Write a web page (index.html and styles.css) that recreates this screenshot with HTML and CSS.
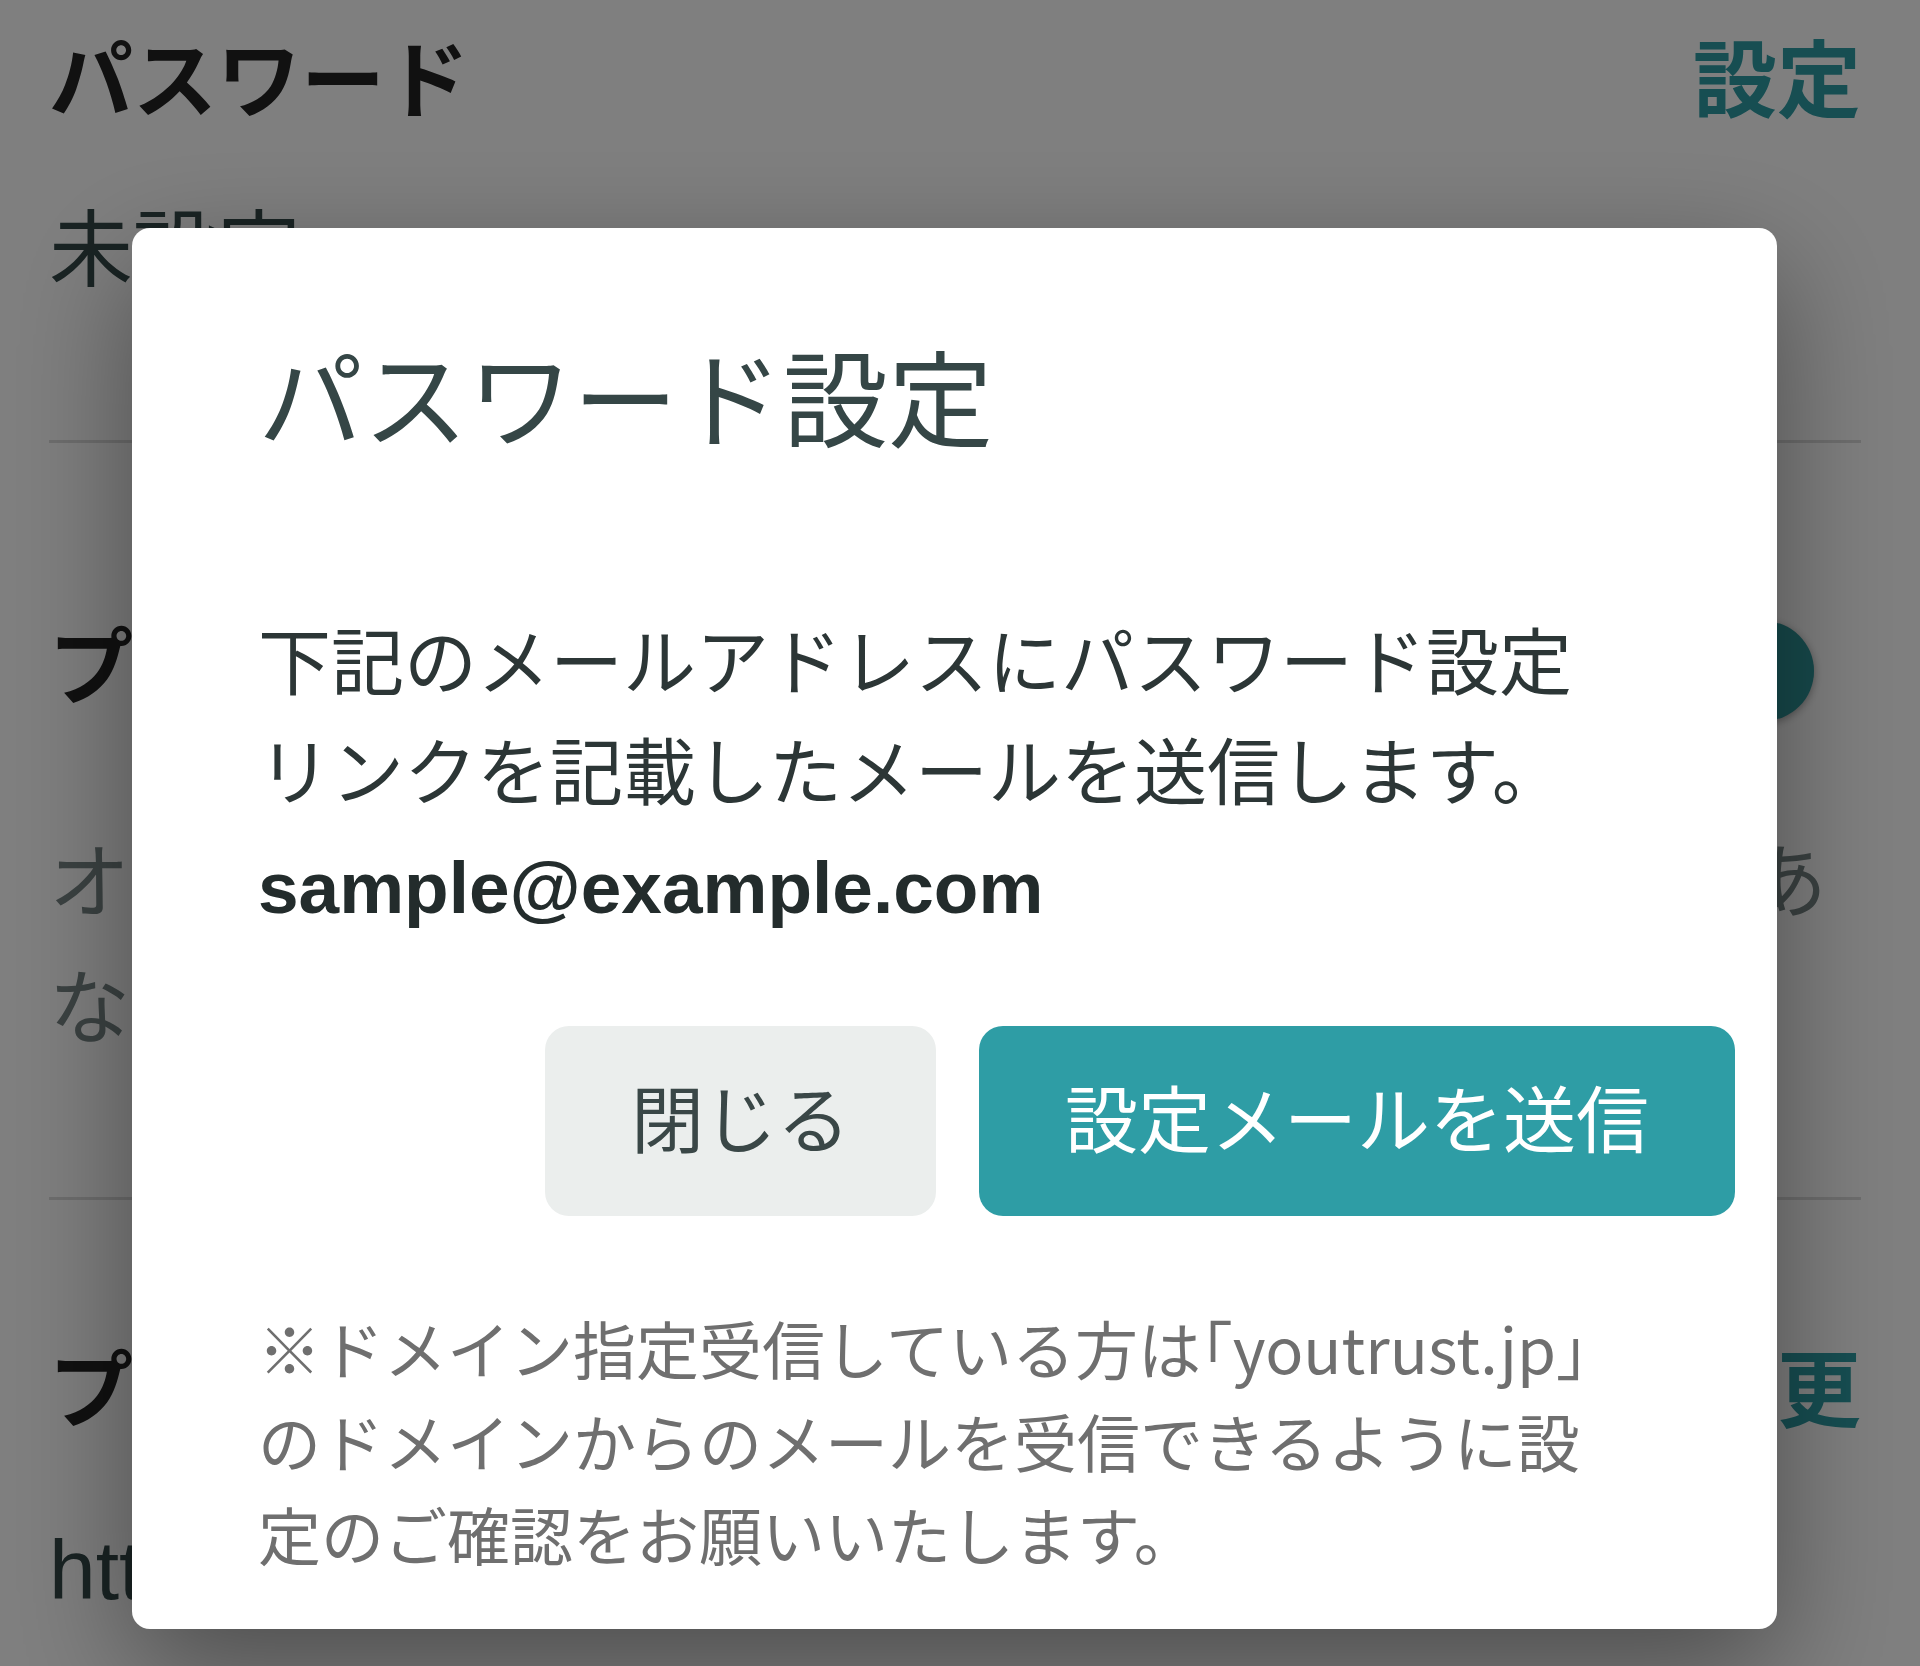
FILE: index.html
```html
<!DOCTYPE html>
<html lang="ja">

<head>
    <meta charset="utf-8">
    <meta name="viewport" content="width=device-width, initial-scale=1.0" />
    <title>パスワード設定</title>
    <link rel="stylesheet" href="styles.css">
</head>

<body>
    <div class="settings">
        <section class="item item-first">
            <div class="item-head">
                <h2>パスワード</h2>
                <a class="item-link" href="#">設定</a>
            </div>
            <p class="item-value">未設定</p>
        </section>

        <section class="item">
            <div class="item-head item-head-toggle">
                <h2>プロフィール公開</h2>
                <span class="toggle"><span class="knob"></span></span>
            </div>
            <p class="item-desc">オンにすると、他のユーザーや企業の担当者があなたのプロフィールを閲覧できます。</p>
        </section>

        <section class="item item-last">
            <div class="item-head">
                <h2>プロフィールURL</h2>
                <a class="item-link" href="#">変更</a>
            </div>
            <p class="item-url">https://youtrust.jp/users/sample</p>
        </section>
    </div>

    <div class="overlay">
        <div class="dialog">
            <h1 class="dialog-title">パスワード設定</h1>
            <p class="dialog-text">下記のメールアドレスにパスワード設定リンクを記載したメールを送信します。</p>
            <p class="dialog-email">sample@example.com</p>
            <div class="dialog-actions">
                <button class="btn btn-close">閉じる</button>
                <button class="btn btn-send">設定メールを送信</button>
            </div>
            <p class="dialog-note">※ドメイン指定受信している方は<span class="bracket">「</span>youtrust.jp<span class="bracket">」</span>のドメインからのメールを受信できるように設定のご確認をお願いいたします。</p>
        </div>
    </div>
</body>

</html>
```

FILE: styles.css
```css
html {
    font-family: "Noto Sans CJK JP", "Noto Sans", sans-serif;
}

body {
    margin: 0;
    background-color: #ffffff;
    overflow: hidden;
}

/* settings page behind the dialog */

.settings {
    padding: 0 59px 0 49px;
}

.item {
    padding: 122px 0 132px;
    border-bottom: 3px solid #dcdcdc;
}

.item-first {
    padding-top: 12px;
    padding-bottom: 133px;
}

.item-last {
    border-bottom: none;
}

.item-head {
    display: flex;
    justify-content: space-between;
    align-items: center;
}

.item-head h2 {
    margin: 0;
    font-size: 84px;
    line-height: 126px;
    font-weight: 700;
    color: #222222;
}

.item-head-toggle {
    min-height: 194px;
}

.item-link {
    font-size: 84px;
    line-height: 126px;
    font-weight: 700;
    color: #2e9da5;
    text-decoration: none;
}

.item-value {
    margin: 43px 0 0;
    font-size: 84px;
    line-height: 126px;
    color: #344848;
}

.item-desc {
    margin: 54px 0 0;
    font-size: 81px;
    line-height: 126px;
    color: #778585;
}

.item-url {
    margin: 59px 0 0;
    font-family: "Liberation Sans", Arial, sans-serif;
    font-size: 84px;
    line-height: 126px;
    color: #344848;
}

.toggle {
    position: relative;
    display: block;
    width: 160px;
    height: 60px;
    margin: 18px 47px 0 0;
    border-radius: 30px;
    background-color: #a9d9dc;
}

.knob {
    position: absolute;
    right: 0;
    top: -20px;
    width: 100px;
    height: 100px;
    border-radius: 50%;
    background-color: #2e9498;
    box-shadow: 0 2px 8px rgba(0, 0, 0, 0.35);
}

/* dialog */

.overlay {
    position: fixed;
    inset: 0;
    display: flex;
    align-items: flex-start;
    padding: 228px 0 0 132px;
    background-color: rgba(0, 0, 0, 0.5);
}

.dialog {
    width: 1645px;
    box-sizing: border-box;
    padding: 92px 42px 50px;
    background-color: #ffffff;
    border-radius: 18px;
    box-shadow: 0 40px 120px rgba(0, 0, 0, 0.4);
}

.dialog-title,
.dialog-text,
.dialog-email,
.dialog-note {
    margin: 0;
    padding: 0 132px 0 84px;
}

.dialog-title {
    font-size: 105px;
    line-height: 147px;
    font-weight: 400;
    color: #354646;
}

.dialog-text {
    margin-top: 135px;
    font-size: 73px;
    line-height: 110px;
    color: #2c3636;
}

.dialog-email {
    padding-top: 11px;
    font-family: "Liberation Sans", Arial, sans-serif;
    font-size: 73px;
    line-height: 110px;
    font-weight: 700;
    color: #232c2c;
}

.dialog-actions {
    display: flex;
    justify-content: flex-end;
    gap: 43px;
    margin-top: 83px;
}

.btn {
    padding: 34px 86px 46px;
    border: none;
    border-radius: 24px;
    font-family: inherit;
    font-size: 73px;
    line-height: 110px;
    cursor: pointer;
}

.btn-close {
    background-color: #ebeeed;
    color: #3a4747;
}

.btn-send {
    background-color: #2e9da5;
    color: #ffffff;
}

.dialog-note {
    margin-top: 84px;
    font-size: 63px;
    line-height: 93px;
    color: #6f6f6f;
}

.bracket {
    font-feature-settings: "halt";
}
```
